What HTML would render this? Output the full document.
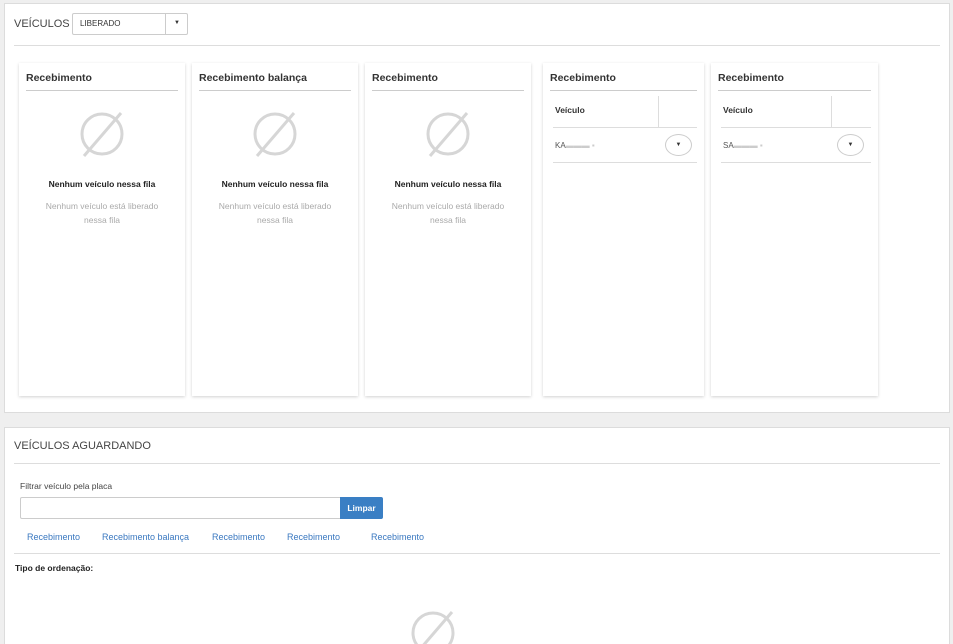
<!DOCTYPE html>
<html><head><meta charset="utf-8"><style>
*{margin:0;padding:0;box-sizing:border-box}
html,body{width:953px;height:644px;overflow:hidden}
body{background:#efefef;font-family:"Liberation Sans",Arial,sans-serif;position:relative;color:#333}
.a{position:absolute}
.panel{position:absolute;background:#fff;border:1px solid #dcdcdc}
.card{position:absolute;top:63px;height:333px;background:#fff;box-shadow:0 1px 3px rgba(0,0,0,.18)}
.card h4{position:absolute;left:7px;top:9px;font-size:10.5px;font-weight:bold;color:#333}
.card .ul{position:absolute;left:7px;right:7px;top:27px;border-top:1px solid #ccc}
.card svg{position:absolute;left:58px;top:46px}
.nt{position:absolute;left:0;right:0;top:116px;text-align:center;font-size:8.5px;font-weight:bold;color:#222}
.ns{position:absolute;left:20px;right:20px;top:136px;text-align:center;font-size:8.5px;color:#aaa;line-height:14px}
.vh{position:absolute;left:12px;top:42px;font-size:8.5px;font-weight:bold}
.vd{position:absolute;left:115px;top:33px;height:31px;border-left:1px solid #ddd}
.l1{position:absolute;left:10px;right:7px;top:64px;border-top:1px solid #ddd}
.l2{position:absolute;left:10px;right:7px;top:99px;border-top:1px solid #ddd}
.pl{position:absolute;left:12px;top:78px;font-size:8px;color:#555}
.bt{position:absolute;left:122px;top:71px;width:27px;height:22px;border:1px solid #ccc;border-radius:50%;font-size:6px;text-align:center;line-height:20px}
.tab{position:absolute;top:532px;font-size:9px;color:#3a78c0}
</style></head><body>
<div class="panel" style="left:4px;top:3px;width:946px;height:410px"></div>
<div class="a" style="left:14px;top:18px;font-size:11px;color:#444">VEÍCULOS</div>
<div class="a" style="left:72px;top:13px;width:116px;height:22px;border:1px solid #ccc;border-radius:2px;background:#fff"></div>
<div class="a" style="left:80px;top:19px;font-size:8px;color:#333">LIBERADO</div>
<div class="a" style="left:165px;top:13px;height:22px;border-left:1px solid #ccc"></div>
<div class="a" style="left:174px;top:20px;font-size:6px">▼</div>
<div class="a" style="left:14px;top:45px;width:926px;border-top:1px solid #ddd"></div>

<div class="card" style="left:19px;width:166px"><h4>Recebimento</h4><div class="ul"></div>
<svg width="50" height="50" viewBox="0 0 50 50"><circle cx="25" cy="25" r="20" fill="none" stroke="#d6d6d6" stroke-width="3"/><line x1="7" y1="47" x2="44" y2="4" stroke="#d6d6d6" stroke-width="3"/></svg>
<div class="nt">Nenhum veículo nessa fila</div><div class="ns">Nenhum veículo está liberado nessa fila</div></div>
<div class="card" style="left:192px;width:166px"><h4>Recebimento balança</h4><div class="ul"></div>
<svg width="50" height="50" viewBox="0 0 50 50"><circle cx="25" cy="25" r="20" fill="none" stroke="#d6d6d6" stroke-width="3"/><line x1="7" y1="47" x2="44" y2="4" stroke="#d6d6d6" stroke-width="3"/></svg>
<div class="nt">Nenhum veículo nessa fila</div><div class="ns">Nenhum veículo está liberado nessa fila</div></div>
<div class="card" style="left:365px;width:166px"><h4>Recebimento</h4><div class="ul"></div>
<svg width="50" height="50" viewBox="0 0 50 50"><circle cx="25" cy="25" r="20" fill="none" stroke="#d6d6d6" stroke-width="3"/><line x1="7" y1="47" x2="44" y2="4" stroke="#d6d6d6" stroke-width="3"/></svg>
<div class="nt">Nenhum veículo nessa fila</div><div class="ns">Nenhum veículo está liberado nessa fila</div></div>
<div class="card" style="left:543px;width:161px"><h4>Recebimento</h4><div class="ul"></div>
<div class="vh">Veículo</div><div class="vd"></div><div class="l1"></div><div class="pl">KA<span style="color:#ccc">▬▬▬ ▪</span></div><div class="bt">▼</div><div class="l2"></div></div>
<div class="card" style="left:711px;width:167px"><h4>Recebimento</h4><div class="ul"></div>
<div class="vh">Veículo</div><div class="vd" style="left:120px"></div><div class="l1"></div><div class="pl">SA<span style="color:#ccc">▬▬▬ ▪</span></div><div class="bt" style="left:126px">▼</div><div class="l2"></div></div>

<div class="panel" style="left:4px;top:427px;width:946px;height:230px"></div>
<div class="a" style="left:14px;top:440px;font-size:11px;color:#444">VEÍCULOS AGUARDANDO</div>
<div class="a" style="left:14px;top:463px;width:926px;border-top:1px solid #ddd"></div>
<div class="a" style="left:20px;top:481px;font-size:8.5px;color:#444">Filtrar veículo pela placa</div>
<div class="a" style="left:20px;top:497px;width:322px;height:22px;border:1px solid #ccc;border-radius:2px 0 0 2px;background:#fff"></div>
<div class="a" style="left:340px;top:497px;width:43px;height:22px;background:#3a7fc4;border-radius:0 2px 2px 0;color:#fff;font-size:8.5px;font-weight:bold;text-align:center;line-height:22px">Limpar</div>
<div class="tab" style="left:27px">Recebimento</div>
<div class="tab" style="left:102px">Recebimento balança</div>
<div class="tab" style="left:212px">Recebimento</div>
<div class="tab" style="left:287px">Recebimento</div>
<div class="tab" style="left:371px">Recebimento</div>
<div class="a" style="left:14px;top:553px;width:926px;border-top:1px solid #ddd"></div>
<div class="a" style="left:15px;top:563px;font-size:8.5px;font-weight:bold;color:#222">Tipo de ordenação:</div>
<svg class="a" style="left:408px;top:608px" width="50" height="50" viewBox="0 0 50 50"><circle cx="25" cy="25" r="20" fill="none" stroke="#d6d6d6" stroke-width="3"/><line x1="7" y1="47" x2="44" y2="4" stroke="#d6d6d6" stroke-width="3"/></svg>
</body></html>
